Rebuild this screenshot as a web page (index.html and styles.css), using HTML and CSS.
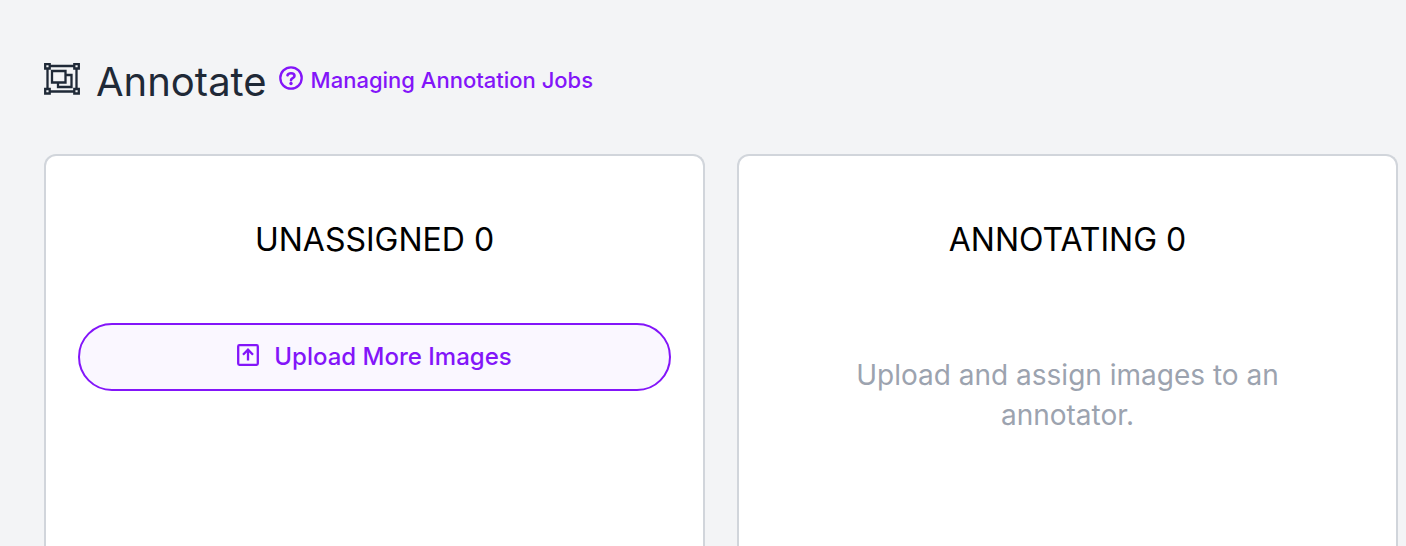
FILE: index.html
```
<!DOCTYPE html>
<html lang="en">
<head>
    <meta charset="UTF-8">
    <meta name="viewport" content="width=device-width, initial-scale=1.0">
    <title>Annotate</title>
    <link rel="stylesheet" href="styles.css">
</head>
<body>
    <header class="header">
        <svg class="header-icon" viewBox="0 0 36 32" aria-hidden="true">
            <path d="M3.500 3h29v25.500h-29z M8 8h13.500v11.500h-13.500z M21.500 12h6v12H14v-4.500"/>
            <path class="handle" d="M1.200 1h4.500v4.500H1.200z M30.300 1h4.500v4.500h-4.500z M1.200 26h4.500v4.500H1.200z M30.300 26h4.500v4.500h-4.500z"/>
        </svg>
        <h1>Annotate</h1>
        <a class="help-link" href="#">
            <svg class="help-icon" viewBox="0 0 24 24" aria-hidden="true">
                <circle cx="12" cy="12" r="10.700"/>
                <path class="mark" d="M8.500 9.200c.5-1.300 1.800-2 3.500-2 2 0 3.500 1 3.500 2.700 0 2.300-3.500 2.200-3.500 4.300"/>
                <circle class="dot" cx="12" cy="17.500" r="1.700"/>
            </svg>
            Managing Annotation Jobs
        </a>
    </header>
    <main class="board">
        <section class="column">
            <h2>UNASSIGNED 0</h2>
            <button class="upload-button" type="button">
                <svg class="upload-icon" viewBox="0 0 22 22" aria-hidden="true">
                    <rect x="1.200" y="1.200" width="19.600" height="19.600" rx="1.200"/>
                    <path d="M11 16.500V6M6 10.700L11 5.700l5 5"/>
                </svg>
                Upload More Images
            </button>
        </section>
        <section class="column">
            <h2>ANNOTATING 0</h2>
            <p class="empty-text">Upload and assign images to an annotator.</p>
        </section>
    </main>
</body>
</html>
```
FILE: styles.css
```
* {
    box-sizing: border-box;
}
body {
    margin: 0;
    min-height: 100vh;
    padding: 56px 8px 0 44px;
    display: flex;
    flex-direction: column;
    font-family: Inter, sans-serif;
    background-color: #f3f4f6;
}
h1, h2, p {
    margin: 0;
    font-weight: 400;
}
svg {
    fill: none;
    stroke: currentColor;
    stroke-width: 2.3;
    flex: none;
}
.header {
    display: flex;
    align-items: center;
    height: 48px;
    margin-bottom: 50px;
    color: #1f2937;
}
.header-icon {
    width: 36px;
    height: 32px;
    margin: 0 16px 2px 0;
}
.handle {
    fill: #f3f4f6;
}
h1 {
    padding-top: 3px;
    font-size: 40px;
    line-height: 48px;
    margin-right: 12px;
}
.help-link {
    display: flex;
    align-items: center;
    gap: 8px;
    color: #8315f9;
    font-size: 22px;
    font-weight: 500;
    text-decoration: none;
}
.help-icon {
    width: 24px;
    height: 24px;
    margin-bottom: 4px;
}
.mark {
    stroke-width: 2.6;
    stroke-linecap: round;
}
.dot {
    fill: currentColor;
    stroke: none;
}
.board {
    flex: 1;
    display: grid;
    grid-template-columns: 1fr 1fr;
    gap: 32px;
}
.column {
    padding: 64px 32px 0;
    border: 2px solid #d1d5db;
    border-bottom: none;
    border-radius: 12px 12px 0 0;
    background-color: #fff;
    text-align: center;
}
h2 {
    font-size: 32px;
    line-height: 40px;
    color: #000;
}
.upload-button {
    display: flex;
    align-items: center;
    justify-content: center;
    gap: 15px;
    width: 100%;
    height: 68px;
    margin-top: 63px;
    padding: 0 0 2px;
    border: 2px solid #8315f9;
    border-radius: 34px;
    background-color: #faf7ff;
    color: #8315f9;
    font-family: inherit;
    font-size: 24px;
    font-weight: 500;
    cursor: pointer;
}
.upload-icon {
    width: 22px;
    height: 22px;
    margin-bottom: 2px;
}
.empty-text {
    margin-top: 95px;
    padding: 0 64px;
    font-size: 28px;
    line-height: 40px;
    color: #9ca3af;
}
```
